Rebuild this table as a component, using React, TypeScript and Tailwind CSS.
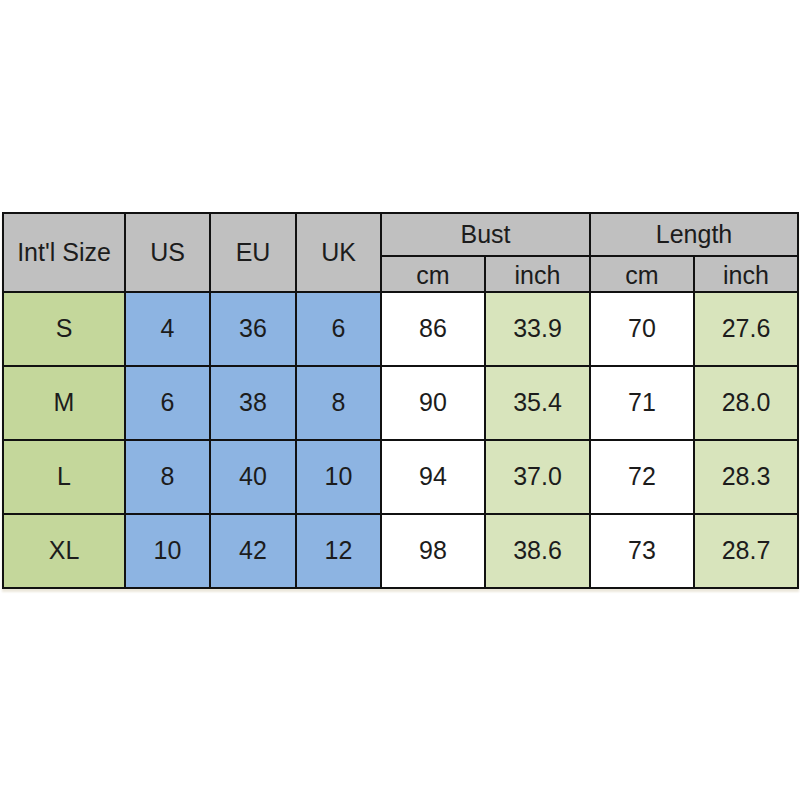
import React from "react";

const rows = [
  ["S", "4", "36", "6", "86", "33.9", "70", "27.6"],
  ["M", "6", "38", "8", "90", "35.4", "71", "28.0"],
  ["L", "8", "40", "10", "94", "37.0", "72", "28.3"],
  ["XL", "10", "42", "12", "98", "38.6", "73", "28.7"],
];

const colBg = [
  "bg-[#c4d79b]",
  "bg-[#8db4e2]",
  "bg-[#8db4e2]",
  "bg-[#8db4e2]",
  "bg-white",
  "bg-[#d8e4bc]",
  "bg-white",
  "bg-[#d8e4bc]",
];

export default function App() {
  const hdr = "bg-[#c0c0c0] flex items-center justify-center";
  return (
    <div
      className="w-[800px] h-[800px] bg-white pt-[212px] pl-[2px] text-[#1c1c1c] text-[25px]"
      style={{ fontFamily: '"Liberation Sans", Arial, sans-serif' }}
    >
      <div className="w-[797px] grid grid-cols-[120px_83px_84px_83px_102px_103px_102px_102px] grid-rows-[41px_34px_72px_72px_72px_72px] gap-[2px] p-[2px] bg-[#111] shadow-[0_3px_2px_#ece8dc]">
        <div className={`${hdr} row-span-2`}>Int'l Size</div>
        <div className={`${hdr} row-span-2`}>US</div>
        <div className={`${hdr} row-span-2`}>EU</div>
        <div className={`${hdr} row-span-2`}>UK</div>
        <div className={`${hdr} col-span-2`}>Bust</div>
        <div className={`${hdr} col-span-2`}>Length</div>
        <div className={`${hdr} pt-[3px]`}>cm</div>
        <div className={`${hdr} pt-[3px]`}>inch</div>
        <div className={`${hdr} pt-[3px]`}>cm</div>
        <div className={`${hdr} pt-[3px]`}>inch</div>
        {rows.map((r, i) =>
          r.map((c, j) => (
            <div
              key={`${i}-${j}`}
              className={`${colBg[j]} flex items-center justify-center`}
            >
              {c}
            </div>
          ))
        )}
      </div>
    </div>
  );
}
